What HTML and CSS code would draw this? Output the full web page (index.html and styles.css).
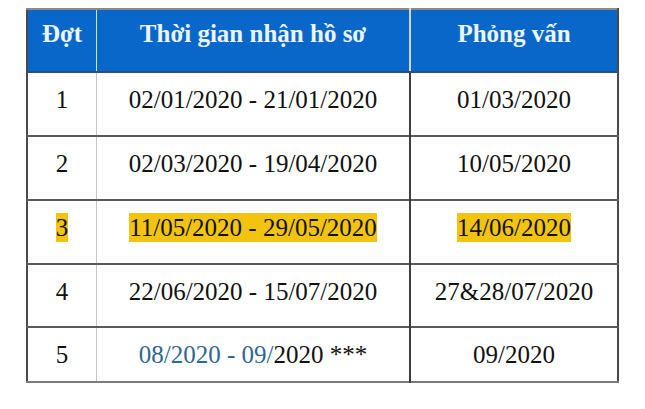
FILE: index.html
```html
<!DOCTYPE html>
<html lang="vi">
<head>
<meta charset="utf-8">
<link rel="stylesheet" href="styles.css">
</head>
<body>
<table class="schedule">
  <thead>
    <tr>
      <th class="c1">Đợt</th>
      <th class="c2">Thời gian nhận hồ sơ</th>
      <th class="c3">Phỏng vấn</th>
    </tr>
  </thead>
  <tbody>
    <tr>
      <td class="c1">1</td>
      <td class="c2">02/01/2020 - 21/01/2020</td>
      <td class="c3">01/03/2020</td>
    </tr>
    <tr>
      <td class="c1">2</td>
      <td class="c2">02/03/2020 - 19/04/2020</td>
      <td class="c3">10/05/2020</td>
    </tr>
    <tr>
      <td class="c1"><span class="hl">3</span></td>
      <td class="c2"><span class="hl">11/05/2020 - 29/05/2020</span></td>
      <td class="c3"><span class="hl">14/06/2020</span></td>
    </tr>
    <tr class="short">
      <td class="c1">4</td>
      <td class="c2">22/06/2020 - 15/07/2020</td>
      <td class="c3">27&amp;28/07/2020</td>
    </tr>
    <tr class="last">
      <td class="c1">5</td>
      <td class="c2"><span class="blue">08/2020 - 09/</span>2020 ***</td>
      <td class="c3">09/2020</td>
    </tr>
  </tbody>
</table>
</body>
</html>
```

FILE: styles.css
```css
html, body {
  margin: 0;
  padding: 0;
  background: #ffffff;
}

body {
  padding: 8px 0 0 26px;
  font-family: "Liberation Serif", "Times New Roman", serif;
  color: #111111;
}

.schedule {
  border-collapse: collapse;
  border: 2px solid #4a4a4a;
  border-top-color: #8a8a8a;
  border-bottom-color: #7a7a7a;
  font-size: 25px;
}

.schedule th {
  background: #0867c9;
  color: #eaf5ff;
  font-weight: bold;
  height: 48px;
  padding: 0 0 13px 0;
  text-align: center;
  vertical-align: middle;
  border-bottom: 2px solid #2a4f80;
}

.schedule th.c2 {
  border-left: 1px solid #d4e0ee;
  border-right: 2px solid #d0d8e0;
}

.schedule td {
  text-align: center;
  vertical-align: middle;
  height: 54px;
  padding: 0 0 8px 0;
  border-top: 2px solid #5a5a5a;
}

.schedule tbody tr:first-child td {
  border-top: none;
}

.schedule tr.short td {
  height: 53px;
}

.schedule tr.last td {
  height: 53px;
  padding: 0;
}

.schedule td.c2 {
  border-left: 1px solid #c4c4c4;
  border-right: 2px solid #3c3c3c;
}

.c1 { width: 68px; }
.c2 { width: 312px; }
.c3 { width: 206px; }

.hl {
  background: #f2c40f;
  padding: 1px 0;
}

.blue {
  color: #2f6792;
}
```
